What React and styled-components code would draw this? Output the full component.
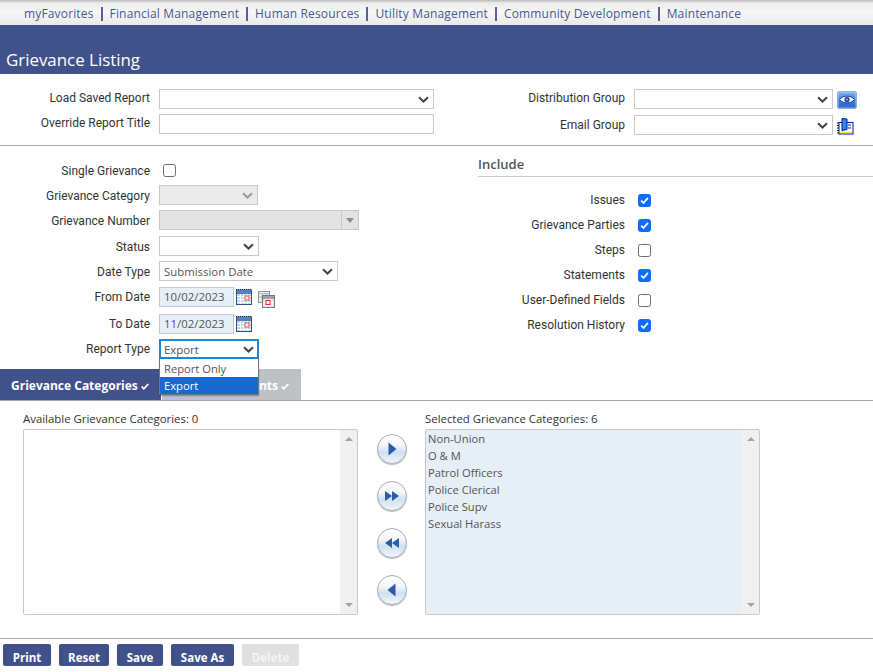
import React from 'react';
import styled, { createGlobalStyle } from 'styled-components';

const GlobalStyle = createGlobalStyle`
  html, body {
    margin: 0;
    padding: 0;
    background: #fff;
    overflow: hidden;
  }
  body {
    font-family: "Roboto", "Liberation Sans", sans-serif;
    font-size: 12px;
    color: #333;
  }
`;

const Page = styled.div`
  width: 873px;
  height: 672px;
  overflow: hidden;
  position: relative;
`;

const MenuBar = styled.nav`
  height: 25px;
  padding: 2px 0 0 24px;
  box-sizing: border-box;
  display: flex;
  align-items: center;
  background: linear-gradient(#b9b9b9 0, #ececec 3px, #f7f7f7 12px, #e9e9e9 25px);
`;

const MenuItem = styled.a`
  font-family: "Open Sans", sans-serif;
  font-size: 12px;
  color: #45598f;
  letter-spacing: 0.155px;
`;

const MenuSep = styled.span`
  width: 2px;
  height: 14px;
  margin: 1px 7px 0;
  background: #5a5f9c;
`;

const Banner = styled.header`
  height: 49px;
  background: #41528b;
  display: flex;
  align-items: flex-end;
  padding: 0 6px 2px;
  box-sizing: border-box;
`;

const Title = styled.h1`
  margin: 0;
  font-family: "Open Sans", sans-serif;
  font-weight: 400;
  font-size: 16.9px;
  line-height: 24px;
  color: #fff;
`;

const SavedSection = styled.section`
  height: 72px;
  box-sizing: border-box;
  padding-top: 15px;
  border-bottom: 1px solid #aaa;
  display: flex;
`;

const Column = styled.div`
  width: ${(p) => p.$width}px;
  flex: none;
`;

const Row = styled.div`
  display: flex;
  align-items: center;
  height: 20px;
  margin-top: ${(p) => p.$mt || 0}px;
`;

const Label = styled.label`
  width: ${(p) => p.$width || 150}px;
  flex: none;
  text-align: right;
  margin-right: ${(p) => p.$mr || 9}px;
  color: #333;
  font-size: 12px;
  line-height: 16px;
  padding-top: ${(p) => (p.$low ? 2 : 0)}px;
  padding-bottom: ${(p) => (p.$up ? 2 : 0)}px;
`;

const SelectWrap = styled.div`
  position: relative;
  width: ${(p) => p.$width}px;
  height: 20px;
  flex: none;
`;

const NativeSelect = styled.select`
  appearance: none;
  display: block;
  width: 100%;
  height: 100%;
  box-sizing: border-box;
  margin: 0;
  padding: 0 20px 0 4px;
  border: 1px solid ${(p) => (p.$focus ? '#1a86d8' : '#c9c9c9')};
  outline: ${(p) => (p.$focus ? '1px solid #1a86d8' : 'none')};
  outline-offset: -2px;
  border-radius: 0;
  background: ${(p) => (p.disabled ? '#ebebeb' : '#fff')};
  font-family: "Open Sans", sans-serif;
  font-size: 11.4px;
  color: #555;
  opacity: 1;
`;

const ChevronIcon = styled.svg`
  position: absolute;
  right: 5px;
  top: 7px;
  width: 11px;
  height: 7px;
  pointer-events: none;
`;

const Chevron = ({ muted }) => (
  <ChevronIcon viewBox="0 0 11 7">
    <path d="M1 1.2 5.5 5.5 10 1.2" fill="none" stroke={muted ? '#9a9a9a' : '#444'} strokeWidth="2" />
  </ChevronIcon>
);

const Select = ({ width, value, disabled, focus }) => (
  <SelectWrap $width={width}>
    <NativeSelect disabled={disabled} $focus={focus} value={value || ''} onChange={() => {}}>
      <option value={value || ''}>{value || ''}</option>
    </NativeSelect>
    <Chevron muted={disabled} />
  </SelectWrap>
);

const TextInput = styled.input`
  display: block;
  width: ${(p) => p.$width}px;
  height: 20px;
  box-sizing: border-box;
  margin: 0;
  padding: 0 4px 1px;
  border: 1px solid #c9c9c9;
  background: ${(p) => p.$bg || '#fff'};
  font-family: "Open Sans", sans-serif;
  font-size: 11.4px;
  color: #555;
  outline: none;
`;

const ComboBox = styled.div`
  width: 200px;
  height: 20px;
  box-sizing: border-box;
  border: 1px solid #c9c9c9;
  background: #e3e3e3;
  display: flex;
  justify-content: flex-end;
`;

const ComboArrow = styled.div`
  width: 16px;
  border-left: 1px solid #c9c9c9;
  display: flex;
  align-items: center;
  justify-content: center;
  &::after {
    content: "";
    border-left: 4px solid transparent;
    border-right: 4px solid transparent;
    border-top: 5px solid #8c8c8c;
  }
`;

const EyeButton = styled.button`
  width: 20px;
  height: 18px;
  margin: 1px 0 0 4px;
  padding: 0;
  border: 1px solid #8fb0e0;
  border-radius: 2px;
  background: linear-gradient(#7db2f2, #3a7ee0 55%, #2a66cc);
  box-shadow: inset 0 0 0 1px rgba(255, 255, 255, 0.25);
  display: flex;
  align-items: center;
  justify-content: center;
`;

const BookIcon = styled.svg`
  width: 17px;
  height: 17px;
  margin: 3px 0 0 4px;
`;

const CalendarIcon = styled.svg`
  width: ${(p) => p.$w || 16}px;
  height: ${(p) => p.$h || 16}px;
  margin-left: ${(p) => p.$ml || 2}px;
  margin-top: ${(p) => p.$mtop || 0}px;
  flex: none;
`;

const Calendar = () => (
  <CalendarIcon viewBox="0 0 16 16">
    <rect x="0.5" y="1" width="15" height="14.500" fill="#c3d4ec" stroke="#35507e" />
    <rect x="1" y="1" width="14" height="4" fill="#4d82c6" />
    <path d="M0 .5h16" stroke="#222" strokeDasharray="1 1" />
    <path d="M1 7.500h14M1 10.500h14M1 13.500h14M4.500 5v10M8 5v10M11.500 5v10" stroke="#fff" />
    <rect x="9" y="7" width="4" height="4" fill="#fff" stroke="#e0542a" />
  </CalendarIcon>
);

const CalendarRange = () => (
  <CalendarIcon $w={17} $h={17} $ml={6} $mtop={4} viewBox="0 0 17 17">
    <rect x="0.5" y="0.5" width="11" height="11" fill="#eef1f5" stroke="#8c8f96" />
    <path d="M1 2.500h10M1 6h10M4 3v8M8 3v8" stroke="#aab4c4" />
    <rect x="4.500" y="4.500" width="12" height="12" fill="#dfe6f0" stroke="#777" />
    <rect x="5" y="5" width="11" height="3" fill="#9aa0aa" />
    <path d="M5 11.500h11M5 14h11M8.500 8v8M12.500 8v8" stroke="#fff" />
    <rect x="8" y="9.500" width="4" height="4" fill="#fff" stroke="#e0242a" />
  </CalendarIcon>
);

const MainSection = styled.section`
  display: flex;
  height: 223px;
`;

const LeftForm = styled.div`
  width: 478px;
  flex: none;
  padding-top: 14px;
  box-sizing: border-box;
  position: relative;
`;

const IncludePanel = styled.div`
  flex: 1;
  padding-top: 10px;
`;

const IncludeTitle = styled.h3`
  margin: 0;
  height: 20px;
  line-height: 17px;
  border-bottom: 1px solid #ccc;
  font-family: "Open Sans", sans-serif;
  font-size: 13px;
  font-weight: 600;
  color: #555;
`;

const IncludeList = styled.div`
  padding-top: 13px;
  display: flex;
  flex-direction: column;
  gap: 5px;
`;

const Check = styled.span`
  width: 13px;
  height: 13px;
  flex: none;
  margin-left: ${(p) => p.$ml || 0}px;
  box-sizing: border-box;
  border-radius: 2.5px;
  border: 1px solid ${(p) => (p.$on ? '#0d6efd' : '#6e6e6e')};
  background: ${(p) => (p.$on ? '#0d6efd' : '#fff')};
  display: inline-flex;
  align-items: center;
  justify-content: center;
`;

const TickSvg = styled.svg`
  width: 9px;
  height: 9px;
`;

const TickMark = () => (
  <TickSvg viewBox="0 0 9 9">
    <path d="M1.200 4.600 3.500 7 7.900 1.800" fill="none" stroke="#fff" strokeWidth="1.800" />
  </TickSvg>
);

const CheckBox = ({ on }) => <Check $on={on}>{on && <TickMark />}</Check>;

const Dropdown = styled.ul`
  position: absolute;
  left: 159px;
  top: 213px;
  width: 100px;
  margin: 0;
  padding: 1px 0 0;
  box-sizing: border-box;
  list-style: none;
  background: #fff;
  border: 1px solid #767676;
  border-top: none;
  box-shadow: 0 1px 1px rgba(0, 0, 0, 0.25);
  z-index: 5;
`;

const DropdownItem = styled.li`
  height: 17px;
  line-height: 17px;
  padding-left: 4px;
  font-family: "Open Sans", sans-serif;
  font-size: 11.2px;
  color: ${(p) => (p.$active ? '#fff' : '#555')};
  background: ${(p) => (p.$active ? '#1a67d2' : '#fff')};
`;

const TabBar = styled.div`
  display: flex;
  height: 32px;
  box-sizing: border-box;
  border-bottom: 1px solid #aaa;
`;

const Tab = styled.div`
  width: ${(p) => p.$width}px;
  margin-right: ${(p) => p.$mr || 0}px;
  display: flex;
  align-items: center;
  justify-content: ${(p) => (p.$active ? 'flex-start' : 'flex-end')};
  gap: 3px;
  box-sizing: border-box;
  padding: ${(p) => (p.$active ? '1px 0 0 11px' : '1px 12px 0 0')};
  background: ${(p) => (p.$active ? '#41528b' : '#bdc1c4')};
  color: #fff;
  font-family: "Open Sans", sans-serif;
  font-weight: 700;
  font-size: 12px;
`;

const TabTick = styled.svg`
  width: 8px;
  height: 7px;
  margin-top: 2px;
`;

const Tick = () => (
  <TabTick viewBox="0 0 8 7">
    <path d="M.7 3.500 2.800 5.800 7.300 1" fill="none" stroke="#fff" strokeWidth="1.700" />
  </TabTick>
);

const ListSection = styled.section`
  display: flex;
  height: 238px;
  box-sizing: border-box;
  border-bottom: 1px solid #aaa;
  padding: 10px 0 0 23px;
`;

const ListColumn = styled.div`
  width: 335px;
  flex: none;
`;

const ListCaption = styled.div`
  height: 18px;
  line-height: 16px;
  font-family: "Open Sans", sans-serif;
  font-size: 11.4px;
  color: #333;
`;

const ListBox = styled.div`
  height: 186px;
  box-sizing: border-box;
  border: 1px solid #c9c9c9;
  border-radius: 2px;
  background: ${(p) => (p.$filled ? '#e6eef6' : '#fff')};
  display: flex;
`;

const ListItems = styled.div`
  flex: 1;
  padding: 0 0 0 2px;
`;

const ListItem = styled.div`
  height: 17px;
  line-height: 17px;
  font-family: "Open Sans", sans-serif;
  font-size: 11.2px;
  color: #555;
`;

const Scrollbar = styled.div`
  width: 17px;
  background: #f0f0f0;
  display: flex;
  flex-direction: column;
  justify-content: space-between;
  align-items: center;
  padding: 7px 0;
  box-sizing: border-box;
`;

const ScrollArrow = styled.span`
  border-left: 4px solid transparent;
  border-right: 4px solid transparent;
  border-bottom: ${(p) => (p.$down ? 'none' : '4px solid #a3a3a3')};
  border-top: ${(p) => (p.$down ? '4px solid #a3a3a3' : 'none')};
`;

const MoveColumn = styled.div`
  width: 67px;
  flex: none;
  display: flex;
  flex-direction: column;
  align-items: center;
  gap: 17px;
  padding-top: 23px;
  box-sizing: border-box;
`;

const RoundButton = styled.button`
  width: 30px;
  height: 30px;
  padding: 0;
  border: 1px solid #a9aeb6;
  border-radius: 50%;
  background: linear-gradient(#ffffff 0, #f4f7fb 35%, #cfe0f3 62%, #f2f6fb 100%);
  box-shadow: 0 1px 1px rgba(0, 0, 0, 0.3);
  display: flex;
  align-items: center;
  justify-content: center;
`;

const MoveSvg = styled.svg`
  width: 14px;
  height: 14px;
`;

const MoveIcon = ({ d }) => (
  <MoveSvg viewBox="0 0 14 14">
    <path d={d} fill="#2a5da8" />
  </MoveSvg>
);

const Footer = styled.footer`
  display: flex;
  gap: 8px;
  padding: 5px 0 0 3px;
`;

const ActionButton = styled.button`
  width: ${(p) => p.$width}px;
  height: 22px;
  padding: 4px 0 0;
  border: none;
  border-radius: 2px;
  background: ${(p) => (p.disabled ? '#e0e0e0' : '#41528b')};
  color: ${(p) => (p.disabled ? '#f4f4f4' : '#fff')};
  font-family: "Open Sans", sans-serif;
  font-weight: 700;
  font-size: 11.5px;
`;

const includes = [
  ['Issues', true],
  ['Grievance Parties', true],
  ['Steps', false],
  ['Statements', true],
  ['User-Defined Fields', false],
  ['Resolution History', true],
];

const selected = ['Non-Union', 'O & M', 'Patrol Officers', 'Police Clerical', 'Police Supv', 'Sexual Harass'];

const menu = ['myFavorites', 'Financial Management', 'Human Resources', 'Utility Management', 'Community Development', 'Maintenance'];

export default function App() {
  return (
    <Page>
      <GlobalStyle />
      <MenuBar>
        {menu.map((m, i) => (
          <React.Fragment key={m}>
            {i > 0 && <MenuSep />}
            <MenuItem>{m}</MenuItem>
          </React.Fragment>
        ))}
      </MenuBar>
      <Banner>
        <Title>Grievance Listing</Title>
      </Banner>

      <SavedSection>
        <Column $width={478}>
          <Row>
            <Label $up>Load Saved Report</Label>
            <Select width={275} />
          </Row>
          <Row $mt={5}>
            <Label $up>Override Report Title</Label>
            <TextInput $width={275} />
          </Row>
        </Column>
        <Column $width={395}>
          <Row>
            <Label $width={147} $up>Distribution Group</Label>
            <Select width={199} />
            <EyeButton aria-label="View">
              <svg width="16" height="11" viewBox="0 0 16 11">
                <path d="M.5 5.500C4 1 12 1 15.500 5.500 12 10 4 10 .5 5.500Z" fill="#f2f7ff" stroke="#16409a" />
                <circle cx="8" cy="5.500" r="2.600" fill="#16409a" />
                <circle cx="8" cy="5.500" r="1" fill="#9cc0f2" />
              </svg>
            </EyeButton>
          </Row>
          <Row $mt={6}>
            <Label $width={147}>Email Group</Label>
            <Select width={199} />
            <BookIcon viewBox="0 0 17 17">
              <path d="M0 5h2M0 7.500h2M0 10h2M0 12.500h2M0 15h2" stroke="#111" />
              <rect x="2" y="4.500" width="14" height="11.500" fill="#fff" stroke="#00149c" />
              <path d="M5 .5 10 1v10.500l-5 1Z" fill="#2a8ae8" stroke="#00149c" />
              <path d="M11 7h3M11 10h3" stroke="#00149c" />
              <path d="M3 13.500h12V15H3z" fill="#f3e85a" />
            </BookIcon>
          </Row>
        </Column>
      </SavedSection>

      <MainSection>
        <LeftForm>
          <Row>
            <Label $low>Single Grievance</Label>
            <Check $ml={4} />
          </Row>
          <Row $mt={5}>
            <Label $low>Grievance Category</Label>
            <Select width={99} disabled />
          </Row>
          <Row $mt={5}>
            <Label $low>Grievance Number</Label>
            <ComboBox><ComboArrow /></ComboBox>
          </Row>
          <Row $mt={6}>
            <Label $low>Status</Label>
            <Select width={100} />
          </Row>
          <Row $mt={5}>
            <Label $low>Date Type</Label>
            <Select width={179} value="Submission Date" />
          </Row>
          <Row $mt={6}>
            <Label>From Date</Label>
            <TextInput $width={75} $bg="#e8f0f7" defaultValue="10/02/2023" />
            <Calendar />
            <CalendarRange />
          </Row>
          <Row $mt={7}>
            <Label>To Date</Label>
            <TextInput $width={75} $bg="#e8f0f7" defaultValue="11/02/2023" />
            <Calendar />
          </Row>
          <Row $mt={5}>
            <Label>Report Type</Label>
            <Select width={100} value="Export" focus />
          </Row>
          <Dropdown>
            <DropdownItem>Report Only</DropdownItem>
            <DropdownItem $active>Export</DropdownItem>
          </Dropdown>
        </LeftForm>
        <IncludePanel>
          <IncludeTitle>Include</IncludeTitle>
          <IncludeList>
            {includes.map(([name, on]) => (
              <Row key={name}>
                <Label $width={147} $mr={13}>{name}</Label>
                <CheckBox on={on} />
              </Row>
            ))}
          </IncludeList>
        </IncludePanel>
      </MainSection>

      <TabBar>
        <Tab $active $width={161} $mr={1}>Grievance Categories <Tick /></Tab>
        <Tab $width={139}>nts <Tick /></Tab>
      </TabBar>

      <ListSection>
        <ListColumn>
          <ListCaption>Available Grievance Categories: 0</ListCaption>
          <ListBox>
            <ListItems />
            <Scrollbar><ScrollArrow /><ScrollArrow $down /></Scrollbar>
          </ListBox>
        </ListColumn>
        <MoveColumn>
          <RoundButton aria-label="Add"><MoveIcon d="M3.500 .5 11.500 7 3.500 13.500Z" /></RoundButton>
          <RoundButton aria-label="Add all"><MoveIcon d="M0 2 7 7 0 12ZM7 2 14 7 7 12Z" /></RoundButton>
          <RoundButton aria-label="Remove all"><MoveIcon d="M14 2 7 7 14 12ZM7 2 0 7 7 12Z" /></RoundButton>
          <RoundButton aria-label="Remove"><MoveIcon d="M10.500 .5 2.500 7 10.500 13.500Z" /></RoundButton>
        </MoveColumn>
        <ListColumn>
          <ListCaption>Selected Grievance Categories: 6</ListCaption>
          <ListBox $filled>
            <ListItems>
              {selected.map((s) => <ListItem key={s}>{s}</ListItem>)}
            </ListItems>
            <Scrollbar><ScrollArrow /><ScrollArrow $down /></Scrollbar>
          </ListBox>
        </ListColumn>
      </ListSection>

      <Footer>
        <ActionButton $width={48}>Print</ActionButton>
        <ActionButton $width={50}>Reset</ActionButton>
        <ActionButton $width={46}>Save</ActionButton>
        <ActionButton $width={63}>Save As</ActionButton>
        <ActionButton $width={57} disabled>Delete</ActionButton>
      </Footer>
    </Page>
  );
}
